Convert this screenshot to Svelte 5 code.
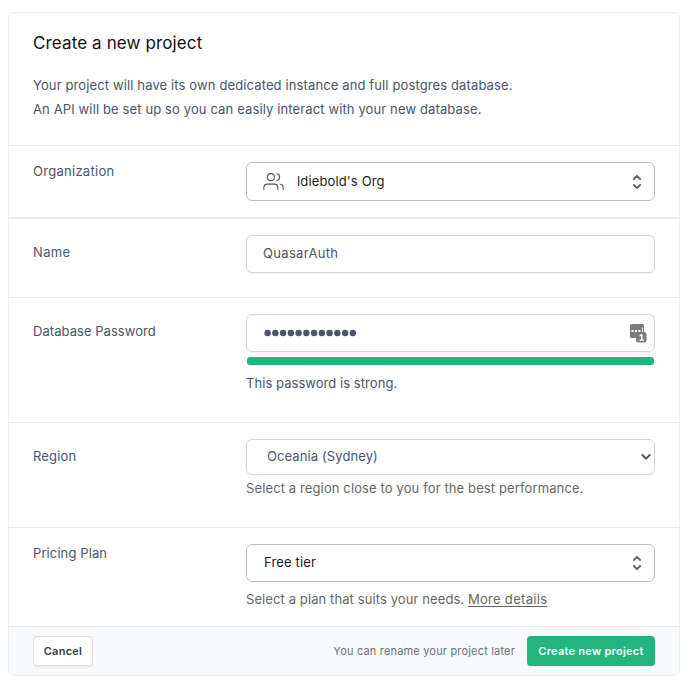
<script>
  let name = $state('QuasarAuth');
  const dots = Array.from({ length: 12 }, (_, i) => i);
</script>

{#snippet chevrons()}
  <svg class="chevrons" width="20" height="20" viewBox="0 0 20 20" fill="none" stroke="#666" stroke-width="2" stroke-linecap="round" stroke-linejoin="round">
    <path d="M6.9 7 10 3.9 13.1 7M6.9 13 10 16.1 13.1 13" />
  </svg>
{/snippet}

<main class="card">
  <header>
    <h1>Create a new project</h1>
    <p class="line-one">Your project will have its own dedicated instance and full postgres database.</p>
    <p class="line-two">An API will be set up so you can easily interact with your new database.</p>
  </header>

  <section class="row org">
    <div class="label"><span class="l-org">Organization</span></div>
    <div class="field">
      <div class="control listbox">
        <svg class="users" width="21" height="21" viewBox="0 0 24 24" fill="none" stroke="#555" stroke-width="1.2" stroke-linecap="round" stroke-linejoin="round">
          <path d="M17 21v-2a4 4 0 0 0-4-4H5a4 4 0 0 0-4 4v2" />
          <circle cx="9" cy="7" r="4" />
          <path d="M23 21v-2a4 4 0 0 0-3-3.87M16 3.13a4 4 0 0 1 0 7.75" />
        </svg>
        <span class="v-org">ldiebold's Org</span>
        {@render chevrons()}
      </div>
    </div>
  </section>

  <section class="row name">
    <div class="label"><span class="l-name">Name</span></div>
    <div class="field"><input class="control" type="text" bind:value={name} /></div>
  </section>

  <section class="row password">
    <div class="label"><span class="l-pass">Database Password</span></div>
    <div class="field">
      <div class="control">
        <svg class="dots" width="94" height="8" viewBox="0 0 94 8" fill="#4a5568">
          {#each dots as d (d)}<circle cx={3.6 + d * 7.75} cy="4" r="3.2" />{/each}
        </svg>
        <svg class="manager" width="17" height="19" viewBox="0 0 17 19">
          <rect x="0" y="0" width="14" height="14" rx="1.5" fill="#7b7b7b" />
          <path d="M1.5 6h2v2h-2zM5 6h2v2H5zM8.5 6h2v2h-2zM12 3.5h1V8h-1z" fill="#fff" />
          <rect x="6" y="8" width="10.5" height="10.5" rx="2.5" fill="#7b7b7b" />
          <path d="M9.4 11.5 11 10.2h1.5v5.2H14v1.3H9.5v-1.3H11v-3.4l-1.2.8z" fill="#fff" />
        </svg>
      </div>
      <div class="meter"></div>
      <p class="hint strong"><span class="h-pass">This password is strong.</span></p>
    </div>
  </section>

  <section class="row region">
    <div class="label"><span class="l-region">Region</span></div>
    <div class="field">
      <div class="control">
        <span class="v-region">Oceania (Sydney)</span>
        <svg class="caret" width="12" height="8" viewBox="0 0 12 8" fill="none" stroke="#4a5568" stroke-width="2">
          <path d="M1.8 1.5 6 5.6 10.2 1.5" />
        </svg>
      </div>
      <p class="hint"><span class="h-region">Select a region close to you for the best performance.</span></p>
    </div>
  </section>

  <section class="row pricing">
    <div class="label"><span class="l-price">Pricing Plan</span></div>
    <div class="field">
      <div class="control listbox">
        <span class="v-price">Free tier</span>
        {@render chevrons()}
      </div>
      <p class="hint"><span class="h-price">Select a plan that suits your needs.</span>{' '}<a class="more">More details</a></p>
    </div>
  </section>

  <footer>
    <button class="cancel"><span>Cancel</span></button>
    <span class="note">You can rename your project later</span>
    <button class="create"><span>Create new project</span></button>
  </footer>
</main>

<style>
  :global(body) { background: #fff; }
  * { box-sizing: border-box; }
  .card {
    width: 672px;
    height: 664px;
    margin: 12px 0 0 8px;
    border: 1px solid #ededed;
    border-radius: 6px;
    overflow: hidden;
    font: 400 13px/20px Inter, sans-serif;
    color: #4a5568;
    display: flow-root;
    white-space: nowrap;
  }
  :global(#app) { display: flow-root; }
  header { height: 133px; padding: 19px 24px 0; border-bottom: 1px solid #ededed; }
  h1 { margin: 0 0 19px; font-size: 17px; line-height: 22px; font-weight: 400; letter-spacing: 0.12px; color: #111; }
  header p { margin: 0; line-height: 24px; letter-spacing: 0.125px; }
  .row { display: flex; padding: 16px 24px 0; border-bottom: 1px solid #ededed; }
  .org { height: 73px; border-bottom-width: 2px; }
  .name { height: 79px; }
  .password { height: 125px; }
  .region { height: 105px; }
  .pricing { height: 99px; border-bottom-color: #e8e9eb; }
  .label { width: 213px; flex: none; }
  .org .label { margin-top: -1px; }
  .name .label, .password .label { margin-top: 7px; }
  .region .label { margin-top: 7px; }
  .pricing .label { margin-top: -1px; }
  .l-org { letter-spacing: 0.28px; }
  .l-name { letter-spacing: 0.35px; }
  .l-pass, .h-pass { letter-spacing: 0.05px; }
  .l-region { letter-spacing: 0.15px; }
  .l-price, .v-region { letter-spacing: 0.1px; }
  .v-org, .v-price { letter-spacing: 0.14px; }
  .h-region { letter-spacing: 0.12px; }
  .h-price { letter-spacing: 0.1px; }
  .field { width: 409px; }
  .control {
    display: flex;
    align-items: center;
    width: 409px;
    height: 38px;
    padding: 0 7px 0 17px;
    border: 1px solid #d2d6dc;
    border-radius: 6px;
    background: #fff;
    box-shadow: 0 1px 2px rgba(0, 0, 0, 0.05);
    font: inherit;
    color: inherit;
    outline: none;
  }
  .listbox { border-color: #bbb; color: #1c1c1c; box-shadow: none; }
  .listbox span { margin-top: -2px; }
  .org .control { height: 39px; padding-left: 16px; }
  .name .control { padding-bottom: 2px; padding-left: 16px; letter-spacing: 0.32px; }
  .region .control { height: 36px; padding: 0 2px 0 20px; }
  .region .control span { margin-top: -2px; }
  .users { margin-right: 13px; }
  .chevrons, .caret, .manager { margin-left: auto; }
  .meter { width: 407px; height: 8px; margin: 5px 0 0 1px; border-radius: 3px; background: #24b47e; }
  .hint { margin: 3px 0 0; color: #666; }
  .strong { margin-top: 8px; color: #4a5568; }
  .pricing .hint { margin-top: 7px; }
  .more { letter-spacing: 0.3px; text-decoration: underline; text-underline-offset: 2px; }
  footer { display: flex; align-items: center; height: 48px; padding: 0 24px; background: #f7f9fb; font-size: 11px; }
  .note { margin-left: auto; margin-right: 12px; letter-spacing: 0.18px; color: #6b7280; }
  button { display: flex; align-items: center; justify-content: center; height: 30px; padding: 0; border-radius: 4px; font: 600 11px/16px Inter, sans-serif; letter-spacing: 0.26px; white-space: nowrap; }
  .cancel { width: 60px; color: #3d3d3d; background: #fff; border: 1px solid #ddd; box-shadow: 0 2px 0 rgba(0, 0, 0, 0.035); }
  .create { width: 128px; color: #fff; background: #24b47e; border: 0; box-shadow: 0 1px 1px rgba(0, 0, 0, 0.06); }
</style>
